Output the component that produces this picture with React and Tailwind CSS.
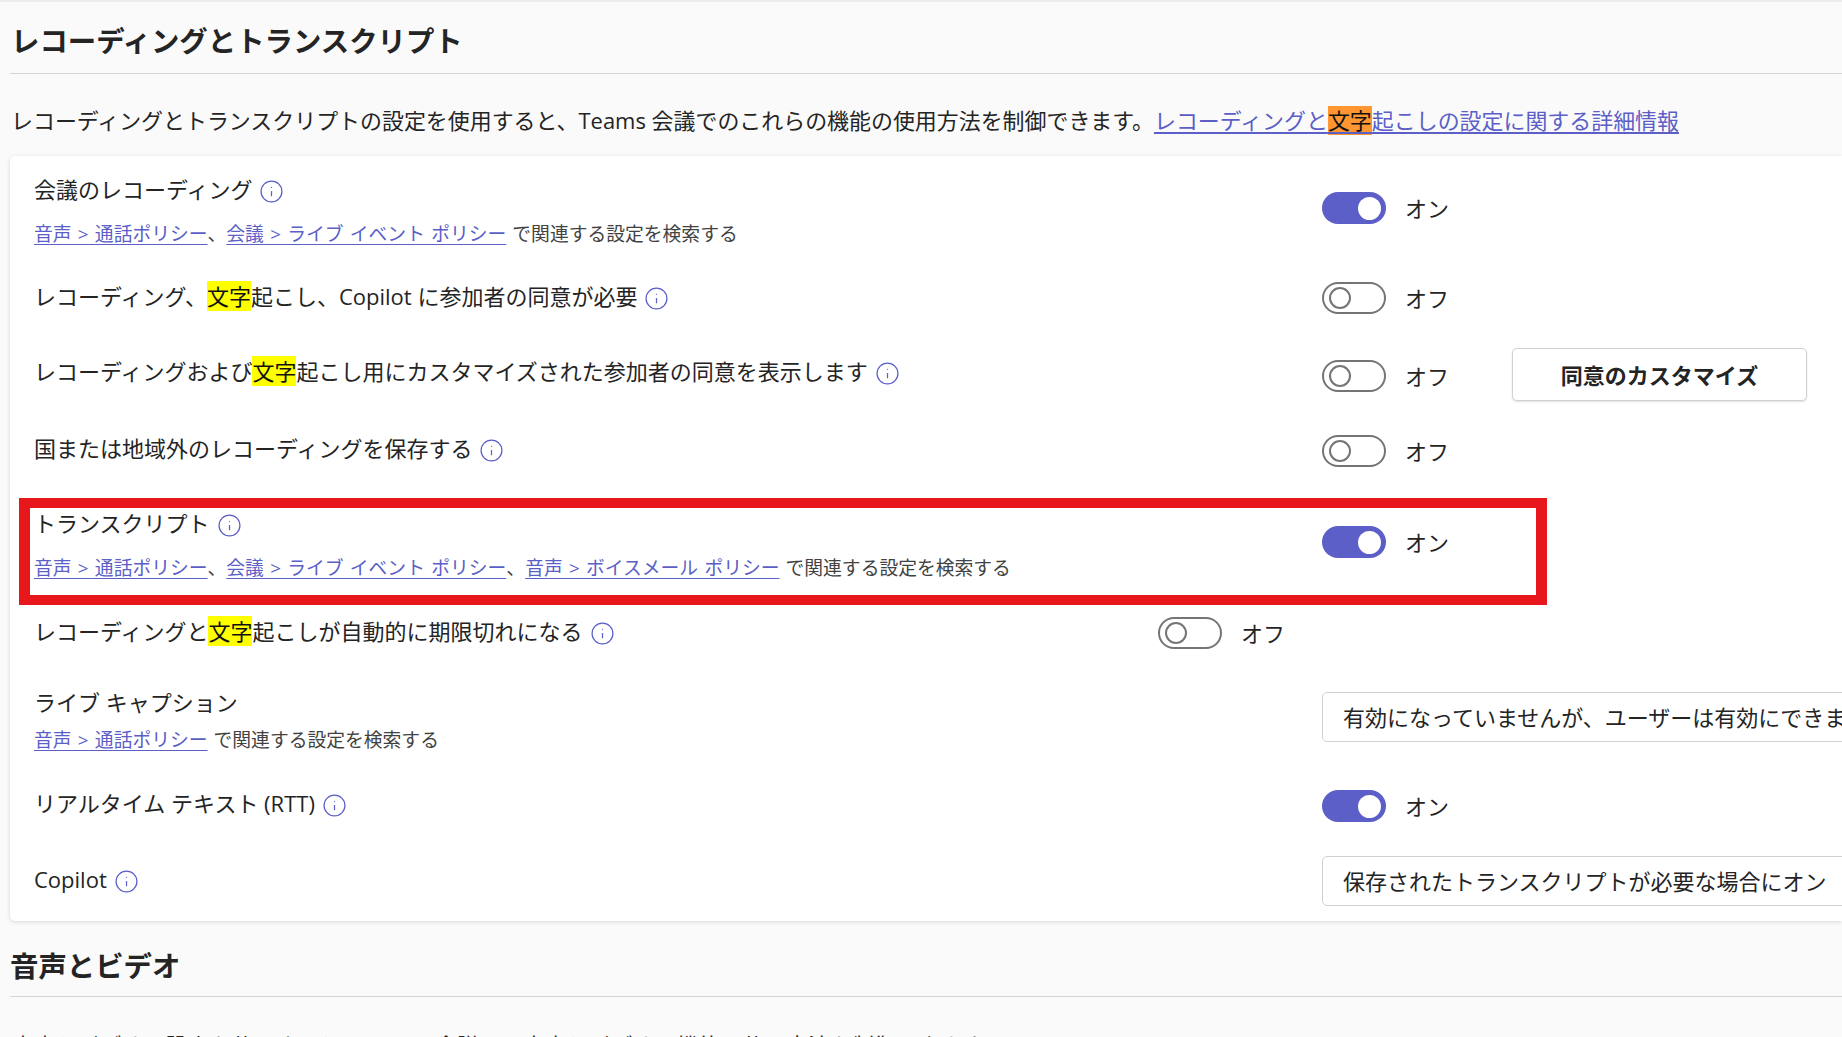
import React from "react";
import { Info } from "lucide-react";

const FONT = "font-['Open_Sans','Noto_Sans_CJK_JP',sans-serif]";

function Hint() {
  return <Info size={25} strokeWidth={1.2} className="inline-block ml-[7px] text-[#5b5fc7] align-[-6px]" />;
}

function Mark({ children }) {
  return <mark className="bg-[#ffff00] text-[#111111]">{children}</mark>;
}

function PolicyLink({ children }) {
  return <a className="text-[#5b5fc7] underline underline-offset-[3px] [word-spacing:1.4px]">{children}</a>;
}

function Toggle({ on }) {
  return (
    <div className="flex items-center">
      {on ? (
        <div className="w-[64px] h-[32px] rounded-full bg-[#5b5fc7] flex items-center justify-end pr-[5px]">
          <div className="w-[23px] h-[23px] rounded-full bg-white" />
        </div>
      ) : (
        <div className="w-[64px] h-[32px] rounded-full border-2 border-[#757575] flex items-center pl-[5px]">
          <div className="w-[22px] h-[22px] rounded-full border-2 border-[#757575]" />
        </div>
      )}
      <span className="ml-[19px] text-[22px] leading-[32px] text-[#242424]">{on ? "オン" : "オフ"}</span>
    </div>
  );
}

function Dropdown({ children }) {
  return (
    <div className="w-[600px] h-[50px] shrink-0 bg-white border border-[#d1d1d1] rounded-[5px] pl-[20px] flex items-center text-[22px] whitespace-nowrap text-[#242424]">
      {children}
    </div>
  );
}

function Related({ gap = "mt-[15px]", children }) {
  return (
    <div className={`${gap} text-[18.8px] leading-[28px] text-[#424242] whitespace-nowrap`}>
      {children}
      <span className="ml-[6px]">で関連する設定を検索する</span>
    </div>
  );
}

function Row({ height, left = "w-[1288px]", control, title, children, overlay }) {
  return (
    <div className={`${height} relative flex pl-[24px] pt-[18px]`}>
      <div className={`${left} shrink-0`}>
        <div className="-mt-[1px] text-[22px] leading-[32px] text-[#242424] whitespace-nowrap">{title}</div>
        {children}
      </div>
      <div className={control}>{overlay}</div>
    </div>
  );
}

export default function App() {
  return (
    <div className={`${FONT} h-screen overflow-hidden bg-[#fafafa] border-t-2 border-[#ececec] pl-[10px]`}>
      {/* レコーディングとトランスクリプト */}
      <h2 className="pt-[19px] pb-[12px] pl-[1px] text-[28.4px] leading-[40px] font-semibold text-[#242424] border-b border-[#d6d6d6]">
        レコーディングとトランスクリプト
      </h2>
      <p className="h-[82px] pt-[31px] pl-[1px] text-[21.95px] leading-[32px] text-[#242424] whitespace-nowrap">
        レコーディングとトランスクリプトの設定を使用すると、Teams 会議でのこれらの機能の使用方法を制御できます。
        <a className="text-[#5b5fc7] underline underline-offset-[3px]">
          レコーディングと<mark className="bg-[#ff9632] text-[#111111]">文字</mark>起こしの設定に関する詳細情報
        </a>
      </p>

      <div className="bg-white rounded-l-[5px] shadow-[0_1px_4px_rgba(0,0,0,0.14)]">
        <Row
          height="h-[107px]"
          control="pt-[18px]"
          title={<>会議のレコーディング<Hint /></>}
          overlay={<Toggle on />}
        >
          <Related>
            <PolicyLink>音声 &gt; 通話ポリシー</PolicyLink>、<PolicyLink>会議 &gt; ライブ イベント ポリシー</PolicyLink>
          </Related>
        </Row>
        <Row
          height="h-[75px]"
          control="pt-[1px]"
          title={<>レコーディング、<Mark>文字</Mark>起こし、Copilot に参加者の同意が必要<Hint /></>}
          overlay={<Toggle />}
        />
        <Row
          height="h-[77px]"
          control="pt-[4px] flex items-start"
          title={<>レコーディングおよび<Mark>文字</Mark>起こし用にカスタマイズされた参加者の同意を表示します<Hint /></>}
          overlay={
            <>
              <Toggle />
              <button className="ml-[63px] -mt-[12px] w-[295px] h-[53px] pt-[2px] bg-white border border-[#d1d1d1] rounded-[5px] shadow-[0_1px_2px_rgba(0,0,0,0.12)] text-[22px] font-semibold text-[#242424]">
                同意のカスタマイズ
              </button>
            </>
          }
        />
        <Row
          height="h-[75px]"
          control="pt-[2px]"
          title={<>国または地域外のレコーディングを保存する<Hint /></>}
          overlay={<Toggle />}
        />
        <Row
          height="h-[108px]"
          control="pt-[18px]"
          title={<>トランスクリプト<Hint /></>}
          overlay={
            <>
              <Toggle on />
              {/* highlight frame lying over the row */}
              <div className="absolute left-[9px] top-[8px] w-[1528px] h-[107px] border-x-[11px] border-y-[10px] border-[#e8171c] pointer-events-none" />
            </>
          }
        >
          <Related>
            <PolicyLink>音声 &gt; 通話ポリシー</PolicyLink>、<PolicyLink>会議 &gt; ライブ イベント ポリシー</PolicyLink>、<PolicyLink>音声 &gt; ボイスメール ポリシー</PolicyLink>
          </Related>
        </Row>
        <Row
          height="h-[71px]"
          left="w-[1124px]"
          control="pt-[1px]"
          title={<>レコーディングと<Mark>文字</Mark>起こしが自動的に期限切れになる<Hint /></>}
          overlay={<Toggle />}
        />
        <Row
          height="h-[101px]"
          control="pt-[5px]"
          title="ライブ キャプション"
          overlay={<Dropdown>有効になっていませんが、ユーザーは有効にできます</Dropdown>}
        >
          <Related gap="mt-[8px]">
            <PolicyLink>音声 &gt; 通話ポリシー</PolicyLink>
          </Related>
        </Row>
        <Row
          height="h-[76px]"
          control="pt-[2px]"
          title={<>リアルタイム テキスト (RTT)<Hint /></>}
          overlay={<Toggle on />}
        />
        <Row
          height="h-[75px]"
          control="-mt-[8px]"
          title={<>Copilot<Hint /></>}
          overlay={<Dropdown>保存されたトランスクリプトが必要な場合にオン</Dropdown>}
        />
      </div>

      {/* 音声とビデオ */}
      <h2 className="mt-[25px] pb-[10px] text-[28.4px] leading-[40px] font-semibold text-[#242424] border-b border-[#d6d6d6]">
        音声とビデオ
      </h2>
      <p className="pt-[33px] pl-[2px] text-[21.95px] leading-[32px] text-[#242424] whitespace-nowrap">
        音声とビデオの設定を使用すると、Teams 会議での音声とビデオの機能の使用方法を制御できます。
      </p>
    </div>
  );
}
